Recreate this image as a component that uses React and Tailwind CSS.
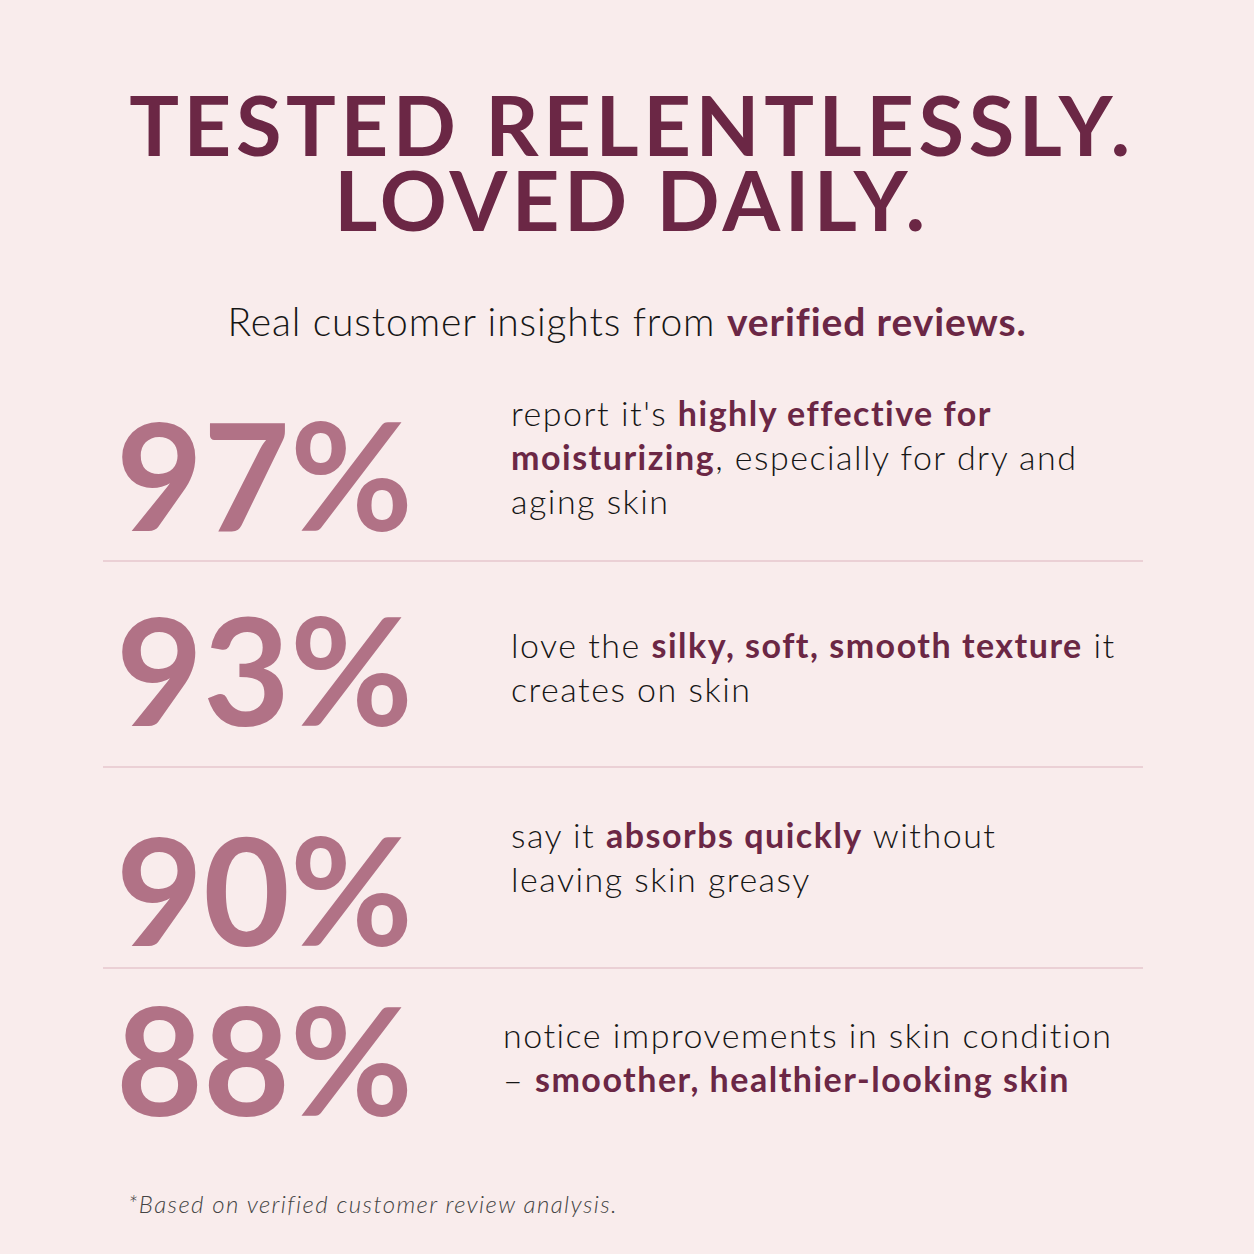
import React from "react";

const B = ({ children }) => <b className="font-bold text-[#6b2745]">{children}</b>;

const rows = [
  {
    n: "97%",
    h: "h-[182px]",
    nMt: "mt-[18px]",
    tMt: "mt-[11px]",
    tW: "w-[408px]",
    body: (
      <>
        report it's <B>highly effective for</B>
        <br />
        <B>moisturizing</B>, especially for dry and
        <br />
        aging skin
      </>
    ),
  },
  {
    n: "93%",
    h: "h-[206px]",
    nMt: "mt-[31px]",
    tMt: "mt-[61px]",
    tW: "w-[408px]",
    body: (
      <>
        love the <B>silky, soft, smooth texture</B> it
        <br />
        creates on skin
      </>
    ),
  },
  {
    n: "90%",
    h: "h-[201px]",
    nMt: "mt-[45px]",
    tMt: "mt-[45px]",
    tW: "w-[408px]",
    body: (
      <>
        say it <B>absorbs quickly</B> without
        <br />
        leaving skin greasy
      </>
    ),
  },
  {
    n: "88%",
    h: "h-[188px]",
    nMt: "mt-[14px]",
    tMt: "mt-[44px]",
    tW: "w-[400px]",
    body: (
      <>
        notice improvements in skin condition
        <br />– <B>smoother, healthier-looking skin</B>
      </>
    ),
  },
];

export default function App() {
  return (
    <div className="w-[1254px] h-[1254px] overflow-hidden bg-[#f9ecec] font-['Lato',sans-serif] text-[#161616] flex flex-col">
      <h1 className="mt-[87px] self-center pl-[10px] text-center text-[#6b2745] font-bold text-[83px] leading-[75px] tracking-[4.6px] uppercase">
        Tested Relentlessly.
        <br />
        Loved Daily.
      </h1>
      <p className="mt-[61px] self-center text-[39px] leading-[46px] tracking-[0.9px] font-light text-center">
        Real customer insights from <B>verified reviews.</B>
      </p>
      <div className="mt-[36px] ml-[103px] w-[1040px] flex flex-col">
        {rows.map((r, i) => (
          <div
            key={r.n}
            className={`flex items-start ${r.h} ${i < rows.length - 1 ? "border-b-2 border-[#ebd0d5]" : ""}`}
          >
            <div className={`${r.tW} ${r.nMt} pl-[13px] shrink-0 text-[#b17286] font-bold text-[150px] leading-[150px]`}>
              {r.n}
            </div>
            <p className={`${r.tMt} text-[34px] leading-[44px] tracking-[1.5px] font-light whitespace-nowrap`}>
              {r.body}
            </p>
          </div>
        ))}
      </div>
      <p className="mt-[32px] ml-[128px] italic font-light text-[24px] leading-[30px] tracking-[1.4px] text-[#444]">
        *Based on verified customer review analysis.
      </p>
    </div>
  );
}
